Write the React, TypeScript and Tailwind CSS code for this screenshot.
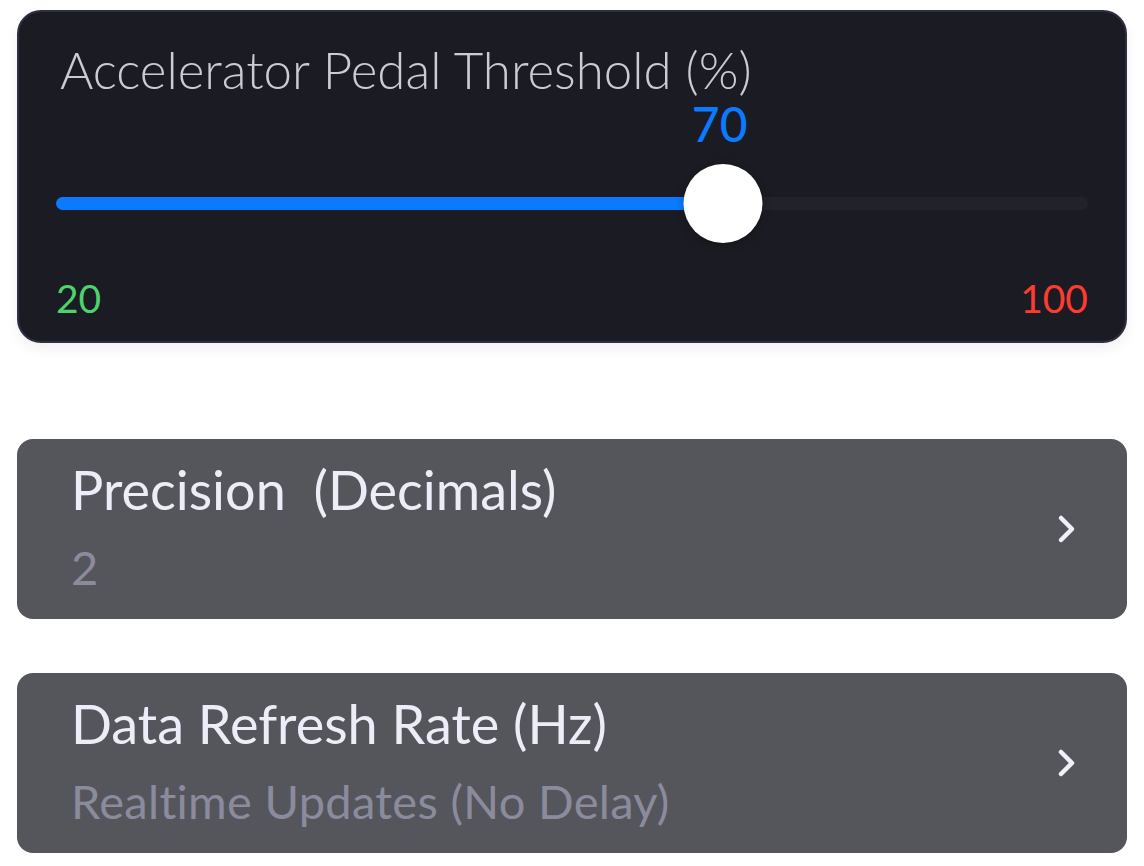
import React from 'react';

const font = { fontFamily: 'Lato, "Noto Sans", sans-serif' };

const Chevron: React.FC = () => (
  <svg width="20" height="30" viewBox="0 0 20 30" fill="none" className="shrink-0">
    <path d="M4 4 L15 15 L4 26" stroke="#f0f0fa" strokeWidth="4.5" strokeLinecap="round" strokeLinejoin="round" />
  </svg>
);

const SettingRow: React.FC<{ title: string; value: string }> = ({ title, value }) => (
  <div className="flex items-center justify-between rounded-[16px] bg-[#55565c] pl-[54px] pr-[50px] h-[180px]">
    <div className="flex flex-col self-stretch pt-[21px]">
      <span className="text-[54px] leading-[60px] text-[#ededf7] whitespace-pre">{title}</span>
      <span className="mt-[21px] text-[47px] leading-[52px] tracking-[0.3px] text-[#8b8b9e]">{value}</span>
    </div>
    <Chevron />
  </div>
);

export default function App() {
  const min = 20;
  const max = 100;
  const value = 70;
  // thumb sits a bit past the linear position in the design
  const pct = 64.6;

  return (
    <div className="min-h-screen bg-white px-[17px] pt-[10px] pb-[13px]" style={font}>
      <div className="rounded-[24px] border-2 border-[#2e2f42] bg-[#1b1b23] shadow-[0_6px_14px_rgba(0,0,0,0.06)] px-[37px] pt-[30px] h-[333px]">
        <div className="pl-[4px] text-[51px] leading-[56px] font-light text-[#cbcbd1]">
          Accelerator Pedal Threshold (%)
        </div>

        <div className="relative h-[145px]">
          <span
            className="absolute top-[1px] -translate-x-1/2 text-[48px] leading-[50px] font-medium text-[#0a7aff]"
            style={{ left: `calc(${pct}% - 3px)` }}
          >
            {value}
          </span>
          <div className="absolute left-0 right-0 top-[99px] h-[13px] rounded-full bg-[#22222b]">
            <div className="h-full rounded-full bg-[#0a7aff]" style={{ width: `${pct}%` }} />
          </div>
          <div
            className="absolute top-[66px] h-[79px] w-[79px] -translate-x-1/2 rounded-full bg-white shadow-[0_2px_8px_rgba(0,0,0,0.25)]"
            style={{ left: `${pct}%` }}
          />
        </div>

        <div className="flex justify-between mt-[33px] text-[39px] leading-[44px]">
          <span className="text-[#4cd36c]">{min}</span>
          <span className="text-[#ff3b30]">{max}</span>
        </div>
      </div>

      <div className="mt-[96px] flex flex-col gap-[54px]">
        <SettingRow title="Precision  (Decimals)" value="2" />
        <SettingRow title="Data Refresh Rate (Hz)" value="Realtime Updates (No Delay)" />
      </div>
    </div>
  );
}
